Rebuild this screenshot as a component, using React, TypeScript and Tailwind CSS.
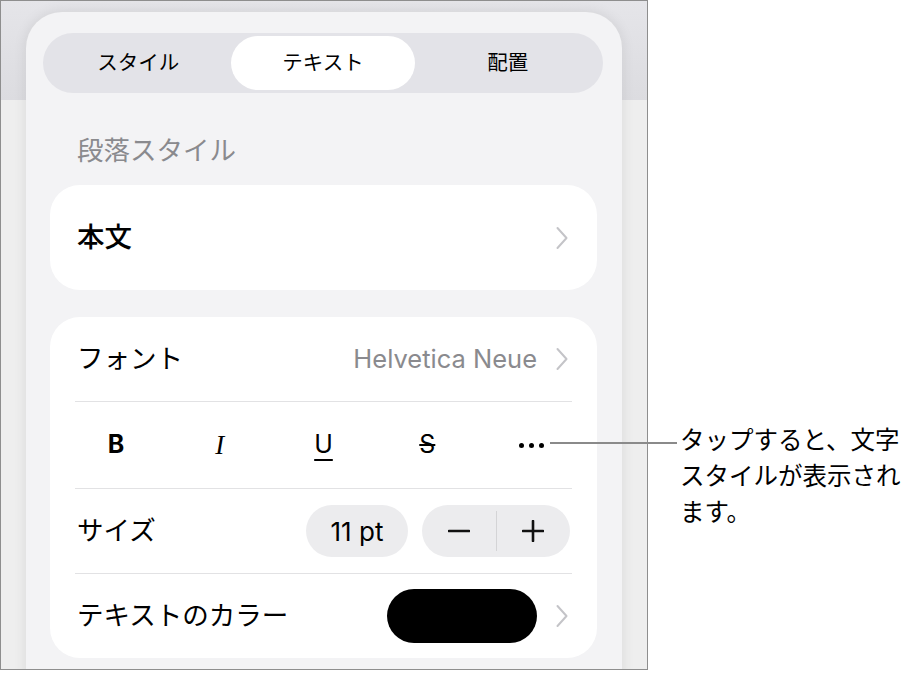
import React from "react";

function Chevron() {
  return (
    <svg width="14" height="24" viewBox="0 0 14 24" fill="none">
      <path d="M2.5 2 L11.5 12 L2.5 22" stroke="#c4c4c8" strokeWidth="2" strokeLinecap="round" strokeLinejoin="round" />
    </svg>
  );
}

function Sep() {
  return <div className="mx-[25px] h-px bg-[#e2e2e4]" />;
}

export default function App() {
  return (
    <div className="w-[912px] h-[673px] bg-white relative overflow-hidden flex font-['Inter','Noto_Sans_CJK_JP',sans-serif] text-black">
      {/* framed screenshot */}
      <div className="w-[648px] h-[670px] shrink-0 border border-[#8e8e8e] overflow-hidden bg-[linear-gradient(to_bottom,#e5e5e9_0px,#dcdce0_99px,#eeeeee_99px,#eeeeee_100%)]">
        <div className="ml-[25px] mt-[11px] w-[596px] h-[720px] rounded-t-[36px] bg-[#f3f3f5] shadow-[0_0_14px_rgba(0,0,0,0.09)] pt-[21px]">
          {/* segmented control */}
          <div className="ml-[17px] w-[560px] h-[60px] rounded-full bg-[#e3e3e8] p-[3px] grid grid-cols-3 text-[20.5px] leading-none">
            <div className="flex items-center justify-center">スタイル</div>
            <div className="flex items-center justify-center bg-white rounded-full">テキスト</div>
            <div className="flex items-center justify-center">配置</div>
          </div>

          {/* heading */}
          <div className="mt-[39px] ml-[51px] text-[26.5px] leading-[36px] text-[#8a8a8e]">段落スタイル</div>

          {/* card 1 */}
          <div className="mt-[17px] ml-[24px] w-[547px] h-[105px] rounded-[30px] bg-white flex items-center justify-between pl-[27px] pr-[28px]">
            <span className="text-[27.5px] font-medium">本文</span>
            <Chevron />
          </div>

          {/* card 2 */}
          <div className="mt-[27px] ml-[24px] w-[547px] rounded-[30px] bg-white">
            <div className="h-[84px] flex items-center justify-between pl-[27px] pr-[28px]">
              <span className="text-[26.5px]">フォント</span>
              <div className="flex items-center gap-[18px]">
                <span className="text-[25.5px] text-[#8a8a8e]">Helvetica Neue</span>
                <Chevron />
              </div>
            </div>
            <Sep />
            <div className="h-[86px] grid grid-cols-5 items-center px-[14px] text-center">
              <span className="text-[25px] font-bold">B</span>
              <span className="text-[27px] italic font-['Liberation_Serif',serif]">I</span>
              <span className="text-[25px] underline underline-offset-[6px] decoration-[2px]">U</span>
              <span className="text-[25px] line-through decoration-[2px]">S</span>
              <div className="flex items-center justify-center gap-[5px]">
                <span className="w-[5px] h-[5px] rounded-full bg-black" />
                <span className="w-[5px] h-[5px] rounded-full bg-black" />
                <span className="w-[5px] h-[5px] rounded-full bg-black" />
              </div>
            </div>
            <Sep />
            <div className="h-[84px] flex items-center justify-between pl-[27px] pr-[27px]">
              <span className="text-[26.5px]">サイズ</span>
              <div className="flex items-center gap-[14px]">
                <div className="w-[102px] h-[52px] rounded-full bg-[#ececee] flex items-center justify-center text-[26px]">11 pt</div>
                <div className="w-[148px] h-[52px] rounded-full bg-[#ececee] flex items-center">
                  <div className="flex-1 flex items-center justify-center">
                    <svg width="22" height="22" viewBox="0 0 22 22">
                      <path d="M1 11 H21" stroke="#111" strokeWidth="2.6" strokeLinecap="round" />
                    </svg>
                  </div>
                  <div className="w-px h-[40px] bg-[#d4d4d6]" />
                  <div className="flex-1 flex items-center justify-center">
                    <svg width="22" height="22" viewBox="0 0 22 22">
                      <path d="M1 11 H21 M11 1 V21" stroke="#111" strokeWidth="2.6" strokeLinecap="round" />
                    </svg>
                  </div>
                </div>
              </div>
            </div>
            <Sep />
            <div className="h-[84px] flex items-center justify-between pl-[27px] pr-[28px]">
              <span className="text-[26.5px]">テキストのカラー</span>
              <div className="flex items-center gap-[18px]">
                <div className="w-[150px] h-[54px] rounded-full bg-black" />
                <Chevron />
              </div>
            </div>
          </div>
        </div>
      </div>

      {/* callout */}
      <div className="ml-[32px] mt-[421px] text-[24.5px] leading-[36px] font-['Noto_Sans_CJK_JP',sans-serif] whitespace-nowrap">
        タップすると、文字
        <br />
        スタイルが表示され
        <br />
        ます。
      </div>
      <div className="absolute left-[550px] top-[442px] w-[127px] h-[2px] bg-[#8a8a8a]" />
    </div>
  );
}
